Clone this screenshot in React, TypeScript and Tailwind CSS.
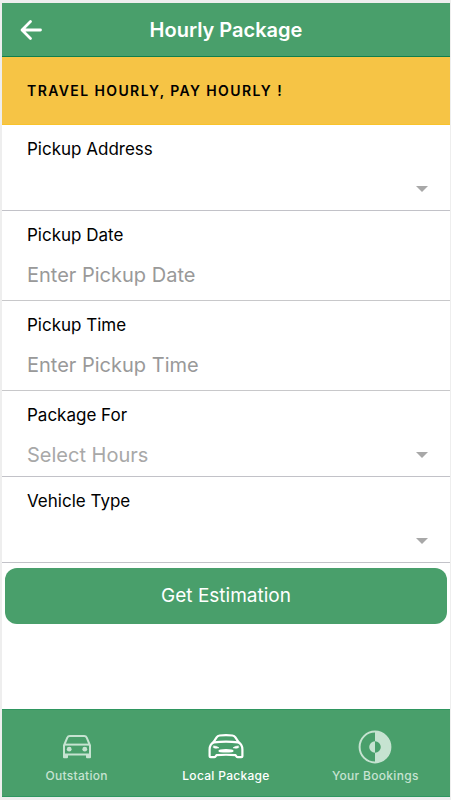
import { IoArrowBack } from "react-icons/io5";

const fields = [
  { id: "address", label: "Pickup Address", type: "select", placeholder: "" },
  { id: "date", label: "Pickup Date", type: "text", placeholder: "Enter Pickup Date" },
  { id: "time", label: "Pickup Time", type: "text", placeholder: "Enter Pickup Time" },
  { id: "hours", label: "Package For", type: "select", placeholder: "Select Hours" },
  { id: "vehicle", label: "Vehicle Type", type: "select", placeholder: "" },
];

const CarIcon = () => (
  <svg className="w-9 h-9" viewBox="0 0 36 36" fill="none" stroke="currentColor" strokeWidth="2" strokeLinejoin="round">
    <path d="M5 16.5 8.3 8.6Q9 7 10.8 7h14.4Q27 7 27.7 8.6L31 16.5V25.5H5z" />
    <path d="M5.5 15.6h25" />
    <circle cx="10.2" cy="20.2" r="2.4" fill="currentColor" stroke="none" />
    <circle cx="25.8" cy="20.2" r="2.4" fill="currentColor" stroke="none" />
    <path d="M4 25h5v3.2q0 1-1 1H5q-1 0-1-1zM27 25h5v3.2q0 1-1 1h-3q-1 0-1-1z" fill="currentColor" stroke="none" />
  </svg>
);

const SportCarIcon = () => (
  <svg className="w-[38px] h-9" viewBox="0 0 38 36" fill="none" stroke="currentColor" strokeWidth="2.2" strokeLinejoin="round" strokeLinecap="round">
    <path d="M6.5 13.2 9.6 8.3Q10.6 6.8 12.6 6.5q6.4-.7 12.8 0 2 .3 3 1.8l3.1 4.9" />
    <path d="M7 13.4q12-1.6 24 0" />
    <path d="M6.5 13.2C3.6 15 2.6 17 2.6 20.4v6.8q0 1 1 1h3.6q.9 0 1.4-.8l.9-1.2q9.5-.9 19 0l.9 1.2q.5.8 1.4.8h3.6q1 0 1-1v-6.8c0-3.4-1-5.4-3.9-7.2" />
    <path d="M6.8 16.9q3.2.2 5.2 1.9-3 1-5.4-.1zM31.2 16.9q-3.2.2-5.2 1.9 3 1 5.4-.1z" fill="currentColor" strokeWidth=".6" />
    <path d="M13.4 20.5q5.6-.8 11.2 0 2 .4 2 1.5t-1.6 1.2q-6 .4-12 0-1.6-.1-1.6-1.2t2-1.5z" fill="currentColor" stroke="none" />
  </svg>
);

const BookingsIcon = () => (
  <svg className="w-9 h-9" viewBox="0 0 36 36" fill="none">
    <circle cx="18" cy="18" r="15.4" stroke="currentColor" strokeWidth="2" />
    <path d="M18 2.6a15.4 15.4 0 0 1 0 30.8v-9.6a5.8 5.8 0 0 0 0-11.6z" fill="currentColor" />
    <path d="M18 12.2a5.8 5.8 0 0 0 0 11.6z" fill="currentColor" />
  </svg>
);

const tabs = [
  { href: "#outstation", label: "Outstation", icon: <CarIcon />, active: false },
  { href: "#local", label: "Local Package", icon: <SportCarIcon />, active: true },
  { href: "#bookings", label: "Your Bookings", icon: <BookingsIcon />, active: false },
];

const Field = ({ id, label, type, placeholder }: (typeof fields)[number]) => {
  if (type === "text") {
    return (
      <div className="px-[25px] pt-3 pb-[9px] border-b border-[#c8c8ca]">
        <label htmlFor={id} className="block text-[17px] leading-6">{label}</label>
        <input
          id={id}
          type="text"
          placeholder={placeholder}
          className="block mt-3 w-full h-8 text-xl bg-transparent outline-none placeholder:text-[#999]"
        />
      </div>
    );
  }

  return (
    <div className="pl-[25px] pr-[22px] pt-3 pb-[5px] border-b border-[#c2c2c8]">
      <label htmlFor={id} className="block text-[17px] leading-6">{label}</label>
      <div className="relative mt-3">
        <select id={id} defaultValue="" className="block w-full h-8 pr-6 text-xl text-[#a8a8a8] bg-transparent appearance-none outline-none">
          <option value="">{placeholder}</option>
        </select>
        <svg className="absolute right-0 top-3 w-3 h-2 pointer-events-none" viewBox="0 0 12 8">
          <path d="M0 1h12L6 7z" fill="#a8a8a8" />
        </svg>
      </div>
    </div>
  );
};

const App = () => {
  return (
    <div className="min-h-screen flex flex-col bg-[#eeeeee] pl-[2px] pr-px pt-[3px] pb-[3px] font-['Inter','Liberation_Sans',sans-serif] text-black">
      <header className="grid grid-cols-[1fr_auto_1fr] items-center h-[54px] px-4 bg-[#499f6b] border-b border-[#0f7f4e] text-white">
        <button type="button" aria-label="Back" className="justify-self-start">
          <svg className="w-[26px] h-[26px]" viewBox="0 0 26 26" fill="none" stroke="currentColor" strokeWidth="2.8" strokeLinecap="round" strokeLinejoin="round">
            <path d="M12.5 4.5 4 13l8.500 8.500M4.500 13h18" />
          </svg>
        </button>
        <h1 className="text-xl font-semibold">Hourly Package</h1>
      </header>

      <main className="flex-1 flex flex-col bg-white">
        <div className="flex items-center h-[68px] px-[25px] bg-[#f6c445] border-b border-[#f9c32b]">
          <p className="text-sm font-semibold tracking-widest">TRAVEL HOURLY, PAY HOURLY !</p>
        </div>

        <form>
          {fields.map((field) => (
            <Field key={field.id} {...field} />
          ))}
          <div className="px-[3px] pt-[5px]">
            <button type="button" className="block w-full h-14 rounded-xl bg-[#499f6b] text-white text-[19px]">
              Get Estimation
            </button>
          </div>
        </form>
      </main>

      <nav className="grid grid-cols-3 h-[88px] bg-[#499f6b] border-y border-[#2f9660] text-white">
        {tabs.map(({ href, label, icon, active }) => (
          <a
            key={href}
            href={href}
            className={`flex flex-col items-center justify-end pb-[10px] ${active ? "text-white" : "text-[#c6e3d1]"}`}
          >
            {icon}
            <span className="text-xs leading-5 font-medium tracking-wide mt-px">{label}</span>
          </a>
        ))}
      </nav>
    </div>
  );
};

export default App;
